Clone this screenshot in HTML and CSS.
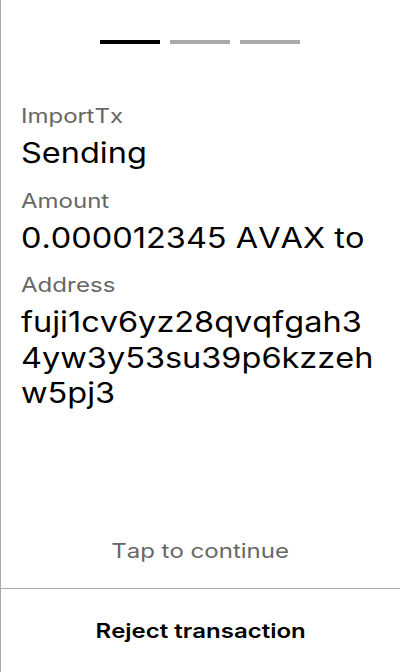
FILE: index.html
```html
<!DOCTYPE html>
<html lang="en">
<head>
<meta charset="utf-8">
<title>Review transaction</title>
<link rel="stylesheet" href="styles.css">
</head>
<body>
<div class="screen">
  <div class="steps">
    <span class="step active"></span>
    <span class="step"></span>
    <span class="step"></span>
  </div>
  <div class="details">
    <div class="label">ImportTx</div>
    <div class="value">Sending</div>
    <div class="label">Amount</div>
    <div class="value">0.000012345 AVAX to</div>
    <div class="label">Address</div>
    <div class="value">fuji1cv6yz28qvqfgah34yw3y53su39p6kzzehw5pj3</div>
  </div>
  <div class="tap"><span class="wide">Tap to continue</span></div>
  <div class="footer"><span class="wide">Reject transaction</span></div>
</div>
</body>
</html>
```

FILE: styles.css
```css
* { box-sizing: border-box; }
html, body {
  margin: 0;
  padding: 0;
  background: #fff;
}
body {
  font-family: Inter, "Noto Sans", sans-serif;
  color: #000;
  font-kerning: none;
}
.screen {
  height: 672px;
  border-left: 1px solid #aaaaaa;
  display: flex;
  flex-direction: column;
}
.steps {
  display: flex;
  justify-content: center;
  gap: 10px;
  padding-top: 40px;
  padding-right: 1px;
}
.step {
  width: 60px;
  height: 4px;
  background: #aaaaaa;
}
.step.active { background: #000; }
.details {
  margin-top: 60px;
  padding: 0 20px;
  flex: 1;
}
.label,
.value {
  transform-origin: 0 0;
}
.label {
  width: 299px;
  transform: scaleX(1.2);
  font-size: 20px;
  line-height: 24px;
  color: #666666;
  margin-bottom: 8px;
}
.value {
  width: 307px;
  transform: scaleX(1.16);
  font-size: 28px;
  line-height: 35.5px;
  margin-bottom: 17px;
  word-break: break-all;
}
.wide {
  display: inline-block;
  transform: scaleX(1.2);
}
.tap {
  text-align: center;
  font-size: 20px;
  line-height: 24px;
  color: #666666;
  padding-bottom: 25px;
}
.footer {
  border-top: 1px solid #aaaaaa;
  height: 84px;
  display: flex;
  align-items: center;
  justify-content: center;
  font-size: 20px;
  font-weight: 600;
  line-height: 24px;
}
```
